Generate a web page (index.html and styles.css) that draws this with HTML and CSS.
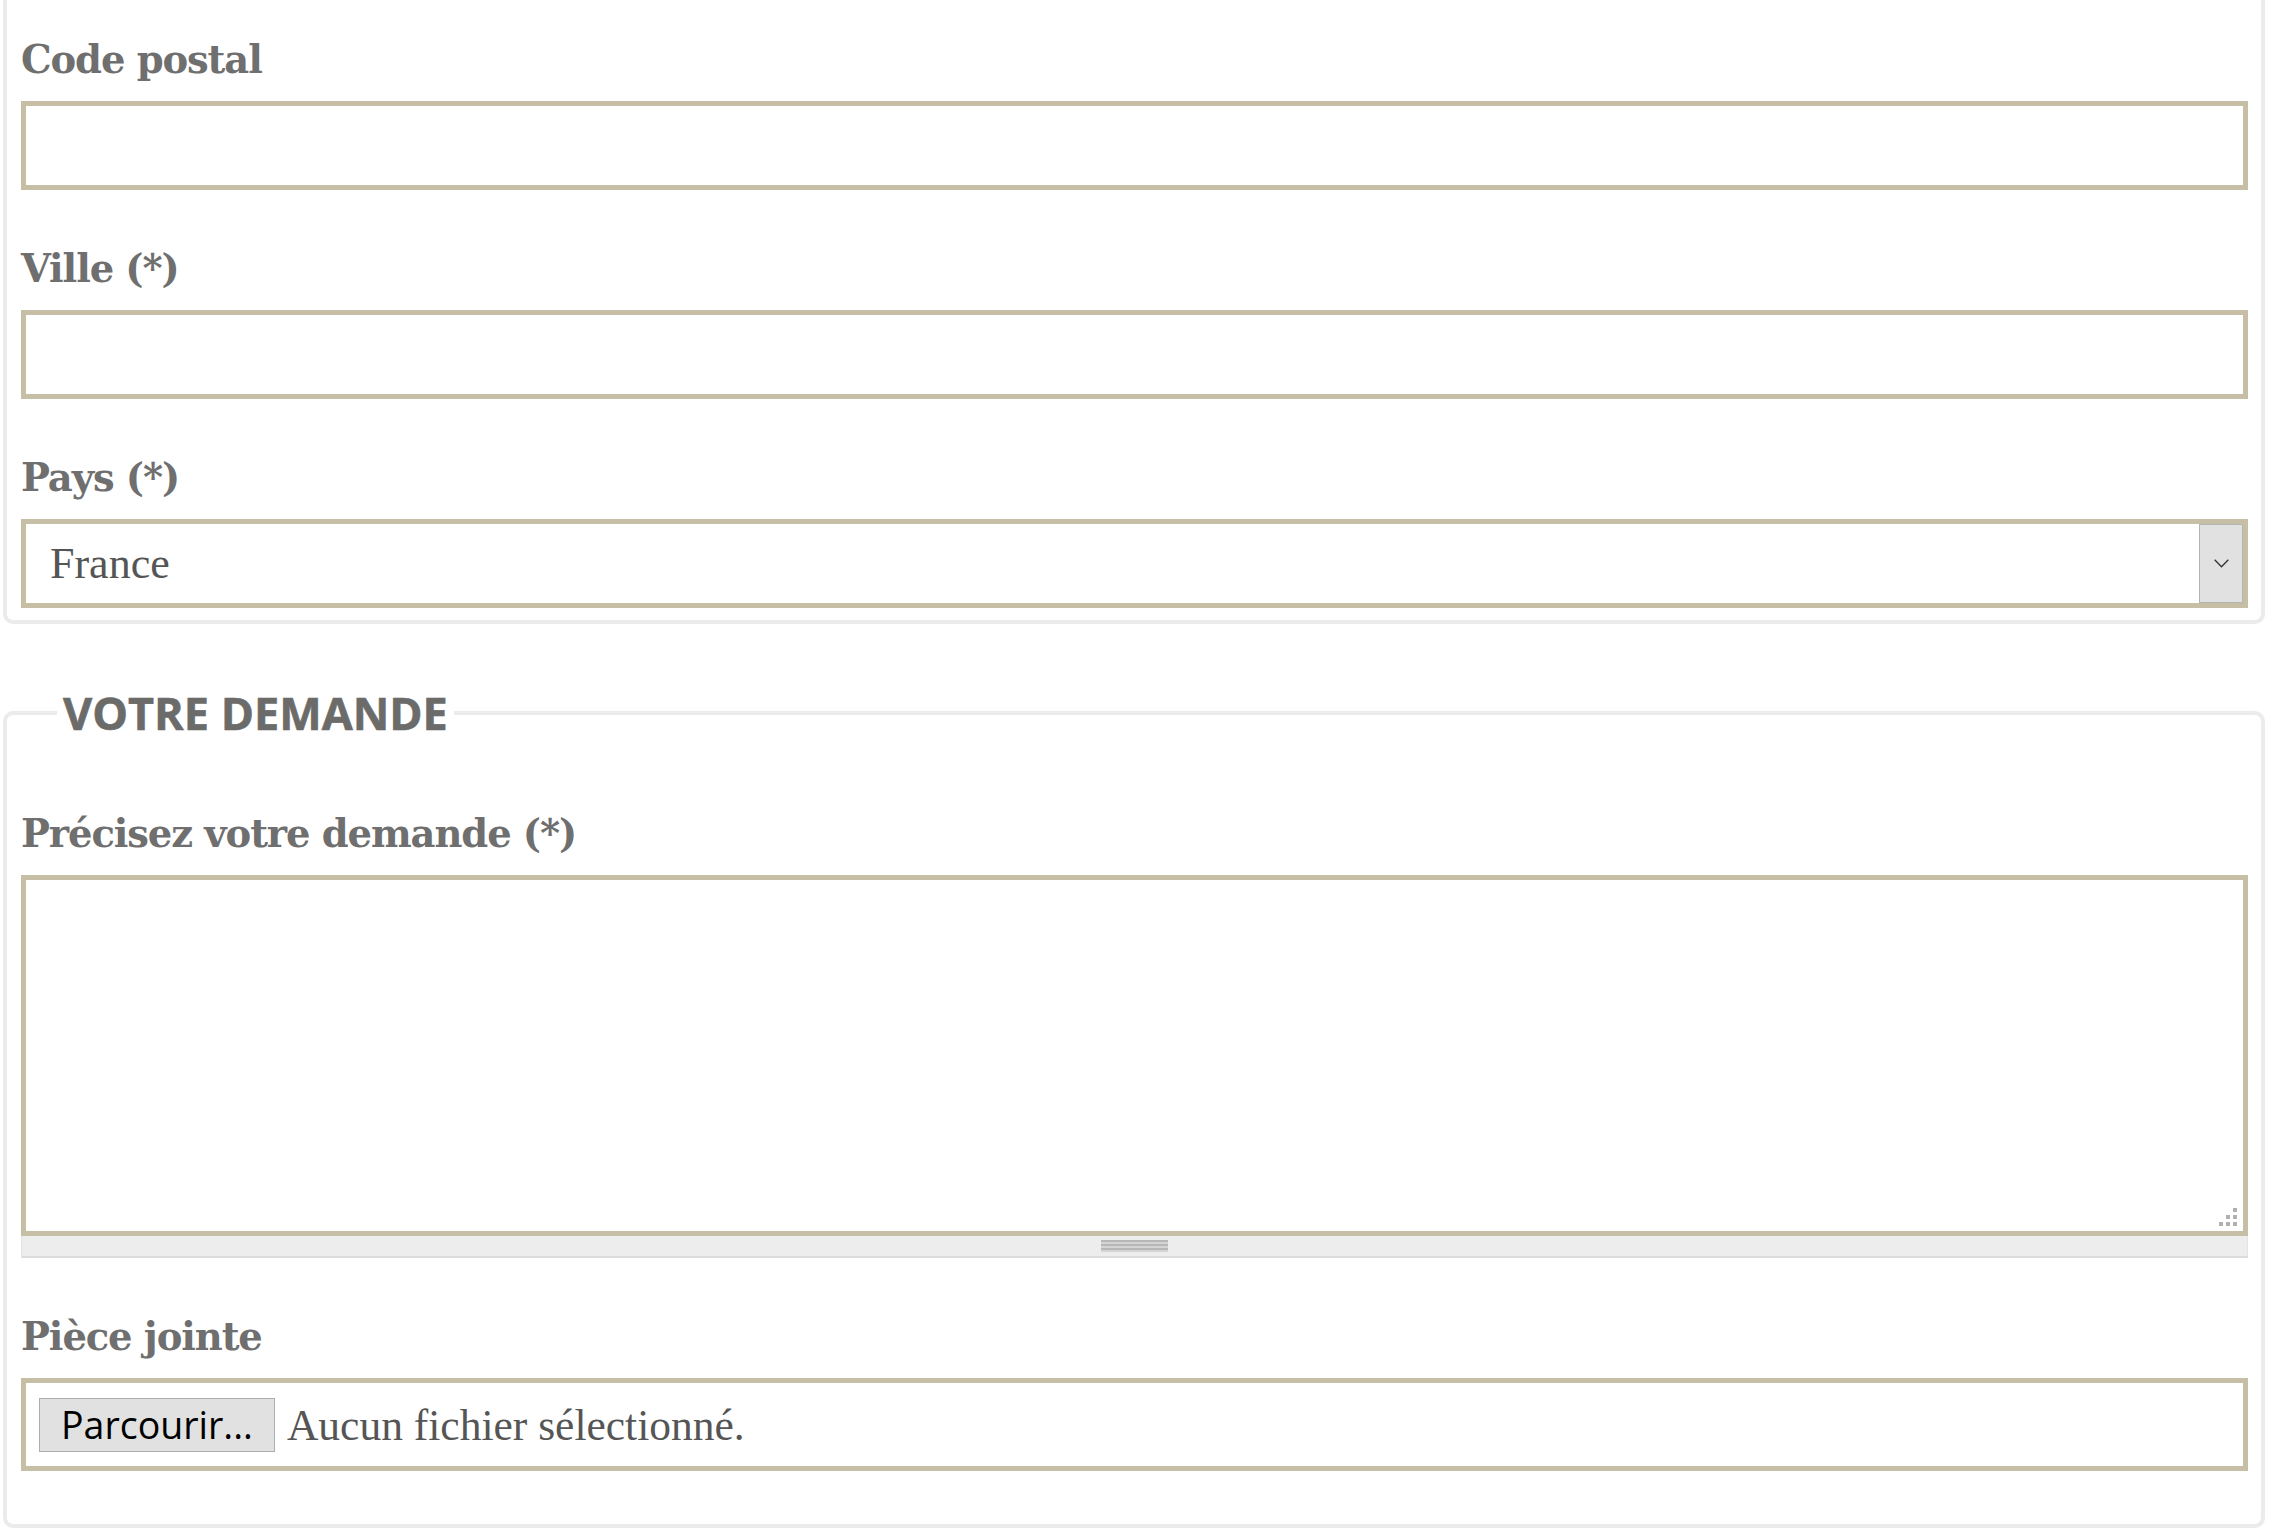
FILE: index.html
```html
<!DOCTYPE html>
<html lang="fr">
<head>
<meta charset="utf-8">
<title>Formulaire</title>
<link rel="stylesheet" href="styles.css">
</head>
<body>
<div class="page">
  <fieldset class="box box-cut">
    <div class="field">
      <label class="lbl" for="cp">Code postal</label>
      <input class="txt" id="cp" type="text">
    </div>
    <div class="field">
      <label class="lbl" for="ville">Ville (*)</label>
      <input class="txt" id="ville" type="text">
    </div>
    <div class="field">
      <label class="lbl">Pays (*)</label>
      <div class="select">
        <span class="select-value">France</span>
        <span class="select-btn">
          <svg width="15" height="9" viewBox="0 0 15 9"><path d="M0.7 0.7 L7.5 7.8 L14.3 0.7" fill="none" stroke="#333333" stroke-width="1.3"/></svg>
        </span>
      </div>
    </div>
  </fieldset>

  <fieldset class="box box-second">
    <legend class="legend">VOTRE DEMANDE</legend>
    <div class="field">
      <label class="lbl" for="dem">Précisez votre demande (*)</label>
      <div class="area-wrap">
        <textarea class="area" id="dem"></textarea>
        <svg class="resize" width="20" height="20" viewBox="0 0 20 20">
          <rect x="15" y="1" width="4" height="4" fill="#b0b0b0"/>
          <rect x="8" y="8" width="4" height="4" fill="#b0b0b0"/>
          <rect x="15" y="8" width="4" height="4" fill="#b0b0b0"/>
          <rect x="1" y="15" width="4" height="4" fill="#b0b0b0"/>
          <rect x="8" y="15" width="4" height="4" fill="#b0b0b0"/>
          <rect x="15" y="15" width="4" height="4" fill="#b0b0b0"/>
        </svg>
      </div>
      <div class="grippie"><span class="grip-lines"></span></div>
    </div>
    <div class="field">
      <label class="lbl">Pièce jointe</label>
      <div class="file">
        <span class="file-btn">Parcourir...</span>
        <span class="file-name">Aucun fichier sélectionné.</span>
      </div>
    </div>
  </fieldset>
</div>
</body>
</html>
```

FILE: styles.css
```css
html, body {
  margin: 0;
  padding: 0;
  background: #ffffff;
}

.page {
  padding-left: 3px;
  width: 2262px;
}

.box {
  margin: 0;
  border: 4px solid #ebebeb;
  border-radius: 10px;
  padding: 0 13px 12px 14px;
  min-width: 0;
}

.box-cut {
  border-top: 0;
  border-radius: 0 0 10px 10px;
  padding-top: 37px;
}

.box-second {
  margin-top: 58px;
  padding-top: 68px;
  padding-bottom: 53px;
}

.legend {
  margin-left: 36px;
  padding: 0 6px;
  font-family: "Open Sans", sans-serif;
  font-weight: 700;
  font-size: 45px;
  line-height: normal;
  color: #6b6b6a;
  -webkit-text-stroke: 0.6px #6b6b6a;
}

.field + .field {
  margin-top: 56px;
}

.lbl {
  display: block;
  font-family: "DejaVu Serif", serif;
  font-weight: 700;
  font-size: 38.5px;
  line-height: 46px;
  letter-spacing: -1.1px;
  word-spacing: 0;
  color: #6f6f6f;
  margin-bottom: 18px;
}

.txt {
  display: block;
  box-sizing: border-box;
  width: 100%;
  height: 89px;
  margin: 0;
  border: 5px solid #c7bea6;
  background: #ffffff;
  outline: none;
}

.select {
  box-sizing: border-box;
  height: 89px;
  border: 5px solid #c7bea6;
  display: flex;
  align-items: stretch;
  background: #ffffff;
}

.select-value {
  flex: 1;
  display: flex;
  align-items: center;
  padding-left: 24px;
  font-family: "Liberation Serif", serif;
  font-size: 44px;
  color: #555555;
}

.select-btn {
  width: 42px;
  background: #e1e1e1;
  border: 1px solid #b4b4b4;
  display: flex;
  align-items: center;
  justify-content: center;
}

.area-wrap {
  position: relative;
}

.area {
  display: block;
  box-sizing: border-box;
  width: 100%;
  height: 361px;
  margin: 0;
  border: 5px solid #c7bea6;
  resize: none;
  outline: none;
  background: #ffffff;
}

.resize {
  position: absolute;
  right: 10px;
  bottom: 9px;
}

.grippie {
  box-sizing: border-box;
  height: 22px;
  background: #ededed;
  border: 1px solid #e3e3e3;
  border-top: 0;
  border-bottom: 2px solid #dcdcdc;
  display: flex;
  justify-content: center;
  align-items: center;
}

.grip-lines {
  width: 67px;
  height: 12px;
  background: repeating-linear-gradient(to bottom, #b7b7b7 0, #b7b7b7 2px, #d4d4d4 2px, #d4d4d4 4px);
}

.file {
  box-sizing: border-box;
  height: 93px;
  border: 5px solid #c7bea6;
  display: flex;
  align-items: center;
  padding-left: 13px;
  background: #ffffff;
}

.file-btn {
  box-sizing: border-box;
  height: 54px;
  padding: 0 21px;
  display: flex;
  align-items: center;
  background: #e1e1e1;
  border: 1px solid #adadad;
  font-family: "Open Sans", sans-serif;
  font-size: 37.5px;
  color: #000000;
}

.file-name {
  margin-left: 12px;
  font-family: "Liberation Serif", serif;
  font-size: 43.5px;
  color: #555555;
}
```
